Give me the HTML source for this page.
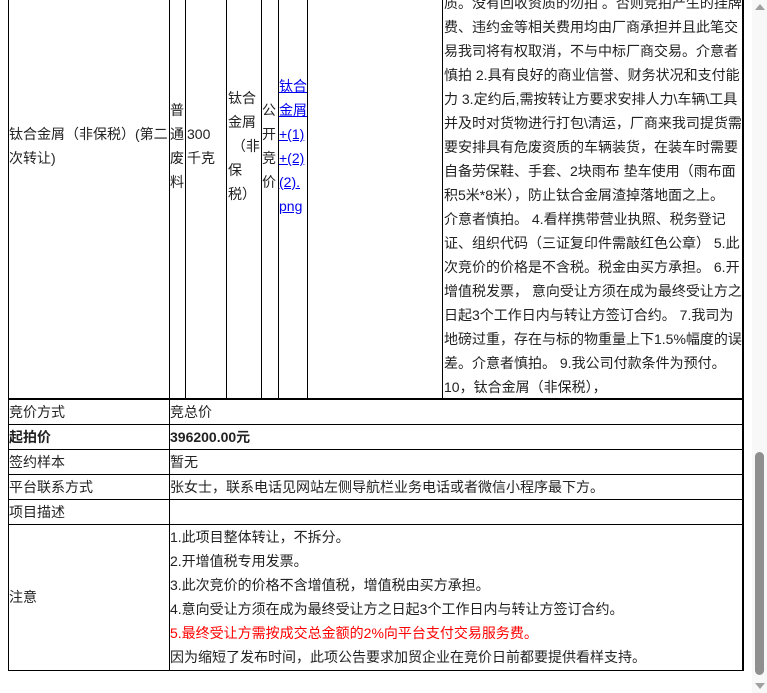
<!DOCTYPE html>
<html><head><meta charset="utf-8"><style>
body{margin:0;width:767px;height:693px;overflow:hidden;background:#fff;position:relative;font-family:"Liberation Sans","Noto Sans CJK SC",sans-serif;font-size:14px;color:#222}
.v{position:absolute;background:#000;width:1px}
.h{position:absolute;background:#000;height:1px}
.t{position:absolute;white-space:nowrap;line-height:24px}
a{color:#00e;text-decoration:underline}
</style></head><body>
<div class="v" style="left:8px;top:0;height:400px"></div>
<div class="v" style="left:169px;top:0;height:400px"></div>
<div class="v" style="left:185px;top:0;height:400px"></div>
<div class="v" style="left:226px;top:0;height:400px"></div>
<div class="v" style="left:261px;top:0;height:400px"></div>
<div class="v" style="left:278px;top:0;height:400px"></div>
<div class="v" style="left:307px;top:0;height:400px"></div>
<div class="v" style="left:442px;top:0;height:400px"></div>
<div class="v" style="left:742px;top:0;height:400px;width:2px"></div>
<div class="h" style="left:8px;top:398px;width:736px;height:2px"></div>

<div class="t" style="left:9px;top:122px">钛合金屑（非保税）(第二<br>次转让)</div>
<div class="t" style="left:170px;top:98px">普<br>通<br>废<br>料</div>
<div class="t" style="left:187px;top:122px">300<br>千克</div>
<div class="t" style="left:228px;top:86px">钛合<br>金屑<br>&nbsp;（非<br>保<br>税）</div>
<div class="t" style="left:262px;top:98px">公<br>开<br>竞<br>价</div>
<div class="t" style="left:279px;top:74px"><a>钛合</a><br><a>金屑</a><br><a>+(1)</a><br><a>+(2)</a><br><a>(2).</a><br><a>png</a></div>
<div class="t" style="left:444px;top:-9px">质。没有回收资质的勿拍 。否则竞拍产生的挂牌<br>费、违约金等相关费用均由厂商承担并且此笔交<br>易我司将有权取消，不与中标厂商交易。介意者<br>慎拍 2.具有良好的商业信誉、财务状况和支付能<br>力 3.定约后,需按转让方要求安排人力\车辆\工具<br>并及时对货物进行打包\清运，厂商来我司提货需<br>要安排具有危废资质的车辆装货，在装车时需要<br>自备劳保鞋、手套、2块雨布 垫车使用（雨布面<br>积5米*8米），防止钛合金屑渣掉落地面之上。<br>介意者慎拍。 4.看样携带营业执照、税务登记<br>证、组织代码（三证复印件需敲红色公章） 5.此<br>次竞价的价格是不含税。税金由买方承担。 6.开<br>增值税发票， 意向受让方须在成为最终受让方之<br>日起3个工作日内与转让方签订合约。 7.我司为<br>地磅过重，存在与标的物重量上下1.5%幅度的误<br>差。介意者慎拍。 9.我公司付款条件为预付。<br>10，钛合金屑（非保税），</div>

<div class="v" style="left:8px;top:400px;height:271px"></div>
<div class="v" style="left:169px;top:400px;height:271px"></div>
<div class="v" style="left:742px;top:400px;height:271px;width:2px"></div>
<div class="h" style="left:8px;top:424px;width:736px"></div>
<div class="h" style="left:8px;top:449px;width:736px"></div>
<div class="h" style="left:8px;top:474px;width:736px"></div>
<div class="h" style="left:8px;top:499px;width:736px"></div>
<div class="h" style="left:8px;top:524px;width:736px"></div>
<div class="h" style="left:8px;top:670px;width:736px"></div>

<div class="t" style="left:9px;top:400px">竞价方式</div><div class="t" style="left:170px;top:400px">竞总价</div>
<div class="t" style="left:9px;top:425px;font-weight:bold">起拍价</div><div class="t" style="left:170px;top:425px;font-weight:bold">396200.00元</div>
<div class="t" style="left:9px;top:450px">签约样本</div><div class="t" style="left:170px;top:450px">暂无</div>
<div class="t" style="left:9px;top:475px">平台联系方式</div><div class="t" style="left:170px;top:475px">张女士，联系电话见网站左侧导航栏业务电话或者微信小程序最下方。</div>
<div class="t" style="left:9px;top:500px">项目描述</div>
<div class="t" style="left:9px;top:585px">注意</div>
<div class="t" style="left:170px;top:525px">1.此项目整体转让，不拆分。<br>2.开增值税专用发票。<br>3.此次竞价的价格不含增值税，增值税由买方承担。<br>4.意向受让方须在成为最终受让方之日起3个工作日内与转让方签订合约。<br><span style="color:#f00">5.最终受让方需按成交总金额的2%向平台支付交易服务费。</span><br>因为缩短了发布时间，此项公告要求加贸企业在竞价日前都要提供看样支持。</div>

<div style="position:absolute;left:752px;top:0;width:15px;height:693px;background:#f8f8f8"></div>
<div style="position:absolute;left:755px;top:452px;width:9px;height:223px;background:#8f8f8f;border-radius:5px"></div>
<div style="position:absolute;left:755px;top:4px;width:0;height:0;border-left:5px solid transparent;border-right:5px solid transparent;border-bottom:6px solid #a0a0a0"></div>
<div style="position:absolute;left:755px;top:683px;width:0;height:0;border-left:5px solid transparent;border-right:5px solid transparent;border-top:6px solid #a0a0a0"></div>
</body></html>
